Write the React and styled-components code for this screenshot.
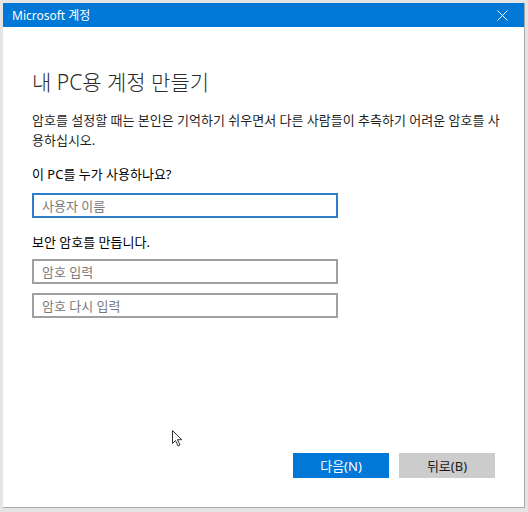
import React from 'react';
import styled, { createGlobalStyle } from 'styled-components';

const Global = createGlobalStyle`
  html, body {
    margin: 0;
    padding: 0;
    background: #e4e4e4;
  }
  body {
    font-family: "Noto Sans", "Noto Sans CJK KR", sans-serif;
  }
`

const Page = styled.div`
  width: 528px;
  height: 512px;
  padding: 3px 0 0 3px;
  box-sizing: border-box;
  overflow: hidden;
`

const Window = styled.div`
  position: relative;
  width: 522px;
  height: 505px;
  background: #fff;
  border-right: 1px solid #a8a8a8;
  border-bottom: 1px solid #a8a8a8;
  box-sizing: border-box;
  display: flex;
  flex-direction: column;
`

const TitleBar = styled.div`
  height: 24px;
  flex: none;
  background: #0078d7;
  color: #fff;
  display: flex;
  align-items: center;
  justify-content: space-between;
  padding: 0 16px 0 9px;
  font-size: 12px;
`

const CloseButton = styled.div`
  width: 12px;
  height: 12px;
  display: flex;
  align-items: center;
  justify-content: center;
`

const Content = styled.div`
  flex: 1;
  display: flex;
  flex-direction: column;
  padding: 41px 29px 29px 29px;
  color: #1a1a1a;
`

const Heading = styled.h1`
  margin: 0;
  font-size: 21px;
  line-height: 28px;
  font-weight: 300;
  color: #2b2b2b;
`

const Text = styled.p`
  margin: ${p => p.$top || 0}px 0 0 0;
  font-size: 13px;
  line-height: 20px;
  width: 470px;
  color: #1f1f1f;
`

const Label = styled.div`
  margin-top: ${p => p.$top}px;
  font-size: 13px;
  line-height: 20px;
  font-weight: 400;
  color: #000;
`

const Input = styled.input`
  display: block;
  width: 306px;
  height: 25px;
  margin-top: ${p => p.$top}px;
  box-sizing: border-box;
  border: 2px solid ${p => (p.$active ? '#2d7dc8' : '#a0a0a0')};
  padding: 0 8px;
  font-family: "Noto Sans", "Noto Sans CJK KR", sans-serif;
  font-size: 13px;
  outline: none;
  color: #222;
  &::placeholder {
    color: #7a7a7a;
  }
`

const Footer = styled.div`
  margin-top: auto;
  display: flex;
  justify-content: flex-end;
  gap: 10px;
`

const Button = styled.button`
  width: 96px;
  height: 25px;
  border: none;
  font-family: "Noto Sans", "Noto Sans CJK KR", sans-serif;
  font-size: 13px;
  background: ${p => (p.$primary ? '#0078d7' : '#cccccc')};
  color: ${p => (p.$primary ? '#fff' : '#1a1a1a')};
  padding: 0;
`

const Pointer = styled.svg`
  position: absolute;
  left: 169px;
  top: 427px;
`

export default function App() {
  return (
    <Page>
      <Global />
      <Window>
        <TitleBar>
          <span>Microsoft 계정</span>
          <CloseButton>
            <svg width="11" height="11" viewBox="0 0 11 11">
              <path d="M0.5 0.5 L10.5 10.5 M10.5 0.5 L0.5 10.5" stroke="#fff" strokeWidth="1" />
            </svg>
          </CloseButton>
        </TitleBar>
        <Content>
          <Heading>내 PC용 계정 만들기</Heading>
          <Text $top={14}>
            암호를 설정할 때는 본인은 기억하기 쉬우면서 다른 사람들이 추측하기 어려운 암호를 사용하십시오.
          </Text>
          <Label $top={14}>이 PC를 누가 사용하나요?</Label>
          <Input $top={9} $active placeholder="사용자 이름" />
          <Label $top={14}>보안 암호를 만듭니다.</Label>
          <Input $top={7} type="password" placeholder="암호 입력" />
          <Input $top={9} type="password" placeholder="암호 다시 입력" />
          <Footer>
            <Button $primary>다음(N)</Button>
            <Button>뒤로(B)</Button>
          </Footer>
        </Content>
        <Pointer width="12" height="18" viewBox="0 0 12 18">
          <path d="M0.5 0.5 L0.5 13.5 L3.5 10.5 L6 16 L8 15 L5.5 9.7 L9.8 9.7 Z" fill="#fff" stroke="#333" strokeWidth="1" strokeLinejoin="round" />
        </Pointer>
      </Window>
    </Page>
  );
}
